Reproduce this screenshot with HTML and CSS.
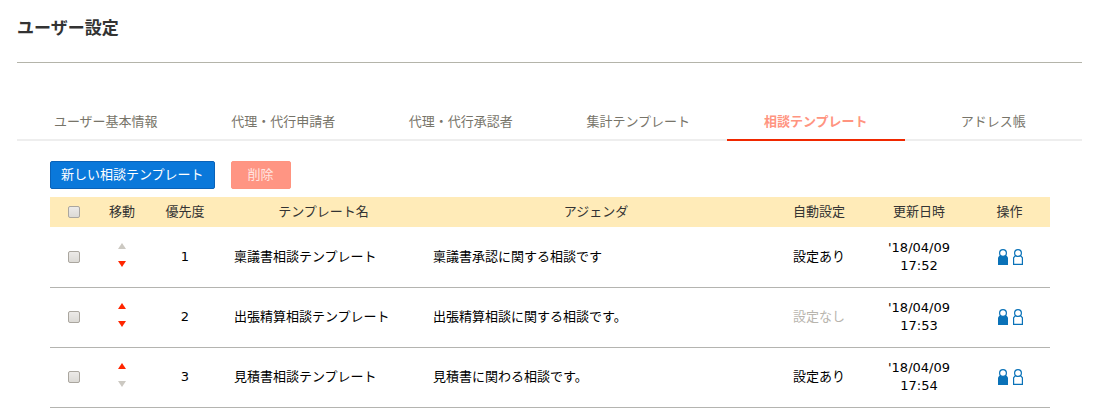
FILE: index.html
```
<!DOCTYPE html>
<html lang="ja">
<head>
    <meta charset="UTF-8">
    <meta name="viewport" content="width=device-width, initial-scale=1.0">
    <title>ユーザー設定</title>
    <link rel="stylesheet" href="styles.css">
</head>
<body>
    <!-- shared icons -->
    <svg class="symbols" aria-hidden="true">
        <symbol id="up" viewBox="0 0 8 6"><path d="M4 0L8 6H0Z" fill="currentColor"/></symbol>
        <symbol id="down" viewBox="0 0 8 6"><path d="M0 0H8L4 6Z" fill="currentColor"/></symbol>
        <symbol id="user-fill" viewBox="0 0 10 16">
            <path d="M0 16V8.5L1.5 6.5H8.5L10 8.5V16Z" fill="currentColor"/>
            <circle cx="5" cy="4" r="3.4" fill="#fff" stroke="currentColor" stroke-width="1.2"/>
        </symbol>
        <symbol id="user-line" viewBox="0 0 10 16">
            <path d="M.6 15.4V8.8L2 7H8L9.4 8.8V15.4Z" fill="#fff" stroke="currentColor" stroke-width="1.2"/>
            <circle cx="5" cy="4" r="3.4" fill="#fff" stroke="currentColor" stroke-width="1.2"/>
        </symbol>
    </svg>

    <div class="container">
        <h1>ユーザー設定</h1>

        <nav class="tabs">
            <a href="#">ユーザー基本情報</a>
            <a href="#">代理・代行申請者</a>
            <a href="#">代理・代行承認者</a>
            <a href="#">集計テンプレート</a>
            <a href="#" class="active">相談テンプレート</a>
            <a href="#">アドレス帳</a>
        </nav>

        <div class="content">
            <div class="buttons">
                <button type="button" class="btn btn-new">新しい相談テンプレート</button>
                <button type="button" class="btn btn-delete" disabled>削除</button>
            </div>

            <table>
                <thead>
                    <tr>
                        <th class="col-check"><input type="checkbox" aria-label="すべて選択"></th>
                        <th class="col-move">移動</th>
                        <th class="col-priority">優先度</th>
                        <th class="col-name">テンプレート名</th>
                        <th>アジェンダ</th>
                        <th class="col-auto">自動設定</th>
                        <th class="col-date">更新日時</th>
                        <th class="col-action">操作</th>
                    </tr>
                </thead>
                <tbody>
                    <tr>
                        <td><input type="checkbox" aria-label="稟議書相談テンプレートを選択"></td>
                        <td>
                            <div class="move">
                                <button type="button" aria-label="上へ" disabled><svg><use href="#up"/></svg></button>
                                <button type="button" aria-label="下へ"><svg><use href="#down"/></svg></button>
                            </div>
                        </td>
                        <td>1</td>
                        <td class="left">稟議書相談テンプレート</td>
                        <td class="left">稟議書承認に関する相談です</td>
                        <td>設定あり</td>
                        <td>'18/04/09<br>17:52</td>
                        <td>
                            <div class="actions">
                                <a href="#" aria-label="担当者"><svg><use href="#user-fill"/></svg></a>
                                <a href="#" aria-label="参照者"><svg><use href="#user-line"/></svg></a>
                            </div>
                        </td>
                    </tr>
                    <tr>
                        <td><input type="checkbox" aria-label="出張精算相談テンプレートを選択"></td>
                        <td>
                            <div class="move">
                                <button type="button" aria-label="上へ"><svg><use href="#up"/></svg></button>
                                <button type="button" aria-label="下へ"><svg><use href="#down"/></svg></button>
                            </div>
                        </td>
                        <td>2</td>
                        <td class="left">出張精算相談テンプレート</td>
                        <td class="left">出張精算相談に関する相談です。</td>
                        <td class="none">設定なし</td>
                        <td>'18/04/09<br>17:53</td>
                        <td>
                            <div class="actions">
                                <a href="#" aria-label="担当者"><svg><use href="#user-fill"/></svg></a>
                                <a href="#" aria-label="参照者"><svg><use href="#user-line"/></svg></a>
                            </div>
                        </td>
                    </tr>
                    <tr>
                        <td><input type="checkbox" aria-label="見積書相談テンプレートを選択"></td>
                        <td>
                            <div class="move">
                                <button type="button" aria-label="上へ"><svg><use href="#up"/></svg></button>
                                <button type="button" aria-label="下へ" disabled><svg><use href="#down"/></svg></button>
                            </div>
                        </td>
                        <td>3</td>
                        <td class="left">見積書相談テンプレート</td>
                        <td class="left">見積書に関わる相談です。</td>
                        <td>設定あり</td>
                        <td>'18/04/09<br>17:54</td>
                        <td>
                            <div class="actions">
                                <a href="#" aria-label="担当者"><svg><use href="#user-fill"/></svg></a>
                                <a href="#" aria-label="参照者"><svg><use href="#user-line"/></svg></a>
                            </div>
                        </td>
                    </tr>
                </tbody>
            </table>
        </div>
    </div>
</body>
</html>
```
FILE: styles.css
```
* {
    box-sizing: border-box;
}

body {
    margin: 0;
    background-color: #fff;
    color: #000;
    font-family: "DejaVu Sans", "Noto Sans CJK JP", sans-serif;
    font-size: 13px;
    line-height: 18px;
}

.symbols {
    display: none;
}

.container {
    padding: 16px 18px 0 17px;
}

h1 {
    margin: 0;
    padding-bottom: 22px;
    border-bottom: 1px solid #b4b4aa;
    color: #333;
    font-size: 17px;
    line-height: 24px;
}

/* tabs */
.tabs {
    display: flex;
    margin-top: 40px;
}

.tabs a {
    flex: 1;
    padding: 10px 0 8px;
    border-bottom: 2px solid #eee;
    color: #777469;
    text-align: center;
    text-decoration: none;
}

.tabs a.active {
    border-bottom-color: #f02800;
    color: #ff9480;
    font-weight: bold;
}

.content {
    padding: 20px 32px 0 33px;
}

/* buttons */
.buttons {
    display: flex;
    gap: 16px;
    margin-bottom: 8px;
}

.btn {
    min-width: 60px;
    height: 28px;
    padding: 0 10px;
    border: 1px solid #0a62b8;
    border-radius: 2px;
    background-color: #0a78da;
    color: #fff;
    font: inherit;
    cursor: pointer;
}

.btn-delete {
    border-color: #ff9480;
    background-color: #ff9583;
    color: #ffe6e1;
}

/* table */
table {
    width: 100%;
    border-collapse: collapse;
    table-layout: fixed;
}

th {
    height: 30px;
    padding: 0;
    background-color: #ffebb8;
    color: #333;
    font-weight: normal;
}

td {
    height: 60px;
    padding: 0;
    border-bottom: 1px solid #b4b4b0;
    text-align: center;
}

td.left {
    padding-left: 10px;
    text-align: left;
}

td.none {
    color: #b8b5ae;
}

.col-check,
.col-move {
    width: 48px;
}

.col-priority {
    width: 78px;
}

.col-name {
    width: 199px;
}

.col-auto,
.col-date {
    width: 100px;
}

.col-action {
    width: 81px;
}

input[type="checkbox"] {
    appearance: none;
    display: block;
    width: 12px;
    height: 12px;
    margin: 0 auto;
    border: 1px solid #aaa69f;
    border-radius: 2px;
    background: linear-gradient(#eceae8, #dcdad6);
}

input[type="checkbox"]:checked {
    background: #0a78da;
}

/* move arrows */
.move {
    display: flex;
    flex-direction: column;
    align-items: center;
    gap: 12px;
    padding-bottom: 4px;
}

.move button {
    padding: 0;
    border: none;
    background: none;
    color: #ff2600;
    cursor: pointer;
}

.move button:disabled {
    color: #ccc9c2;
}

.move svg {
    display: block;
    width: 8px;
    height: 6px;
}

.actions {
    display: flex;
    justify-content: center;
    gap: 5px;
    padding-left: 2px;
}

.actions a {
    color: #0a72b8;
}

.actions svg {
    display: block;
    width: 10px;
    height: 16px;
}
```
